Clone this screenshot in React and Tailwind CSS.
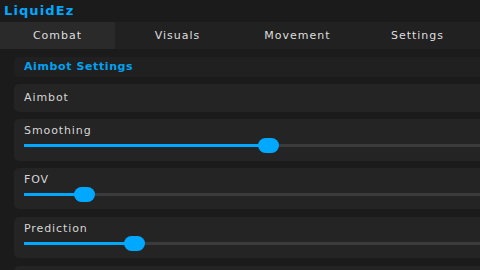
import React from "react";

const font = { fontFamily: '"DejaVu Sans", "Liberation Sans", sans-serif' };

function SliderRow({ label, knob, h, mb }) {
  return (
    <div className={"w-[480px] shrink-0 rounded-[5px] bg-[#242424] px-[10px] pt-[5px] flex flex-col " + h + " " + mb}>
      <div className="h-[14px] leading-[14px] text-[11px] tracking-[0.9px] text-[#d6d6d6]">{label}</div>
      <div className="relative h-[15px]">
        <div className="absolute left-0 right-0 top-[6px] h-[3px] bg-[#3b3b3b]" />
        <div className="absolute left-0 top-[6px] h-[3px] bg-[#00a8ff]" style={{ width: knob - 24 }} />
        <div
          className="absolute top-0 h-[15px] w-[21px] rounded-full bg-[#00a8ff]"
          style={{ left: knob - 24 - 10.5 }}
        />
      </div>
    </div>
  );
}

export default function App() {
  const tabs = ["Combat", "Visuals", "Movement", "Settings"];
  return (
    <div className="w-[480px] h-[270px] overflow-hidden bg-[#1b1b1b] flex flex-col" style={font}>
      <div className="h-[22px] shrink-0 flex items-center pl-[4px] text-[13px] font-bold tracking-[1.1px] text-[#00a8ff]">
        LiquidEz
      </div>
      <div className="h-[27px] shrink-0 bg-[#212121] flex gap-[5px]">
        {tabs.map((t, i) => (
          <div
            key={t}
            className={
              "w-[115px] shrink-0 flex items-center justify-center pt-[2px] text-[11px] tracking-[1px] text-[#dedede] " +
              (i === 0 ? "bg-[#2a2a2a]" : "")
            }
          >
            {t}
          </div>
        ))}
      </div>
      <div className="pl-[14px] pt-[8px] flex flex-col">
        <div className="w-[480px] h-[20px] mb-[7px] shrink-0 rounded-[5px] bg-[#202020] px-[10px] flex items-center text-[11px] font-bold tracking-[0.6px] text-[#00a2f0]">
          Aimbot Settings
        </div>
        <div className="w-[480px] h-[28px] mb-[7px] shrink-0 rounded-[5px] bg-[#242424] px-[10px] flex items-center text-[11px] tracking-[0.9px] text-[#d6d6d6]">
          Aimbot
        </div>
        <SliderRow label="Smoothing" knob={268} h="h-[42px]" mb="mb-[7px]" />
        <SliderRow label="FOV" knob={84} h="h-[41px]" mb="mb-[8px]" />
        <SliderRow label="Prediction" knob={134} h="h-[41px]" mb="mb-[8px]" />
        <div className="w-[480px] h-[41px] shrink-0 rounded-[5px] bg-[#242424]" />
      </div>
    </div>
  );
}
